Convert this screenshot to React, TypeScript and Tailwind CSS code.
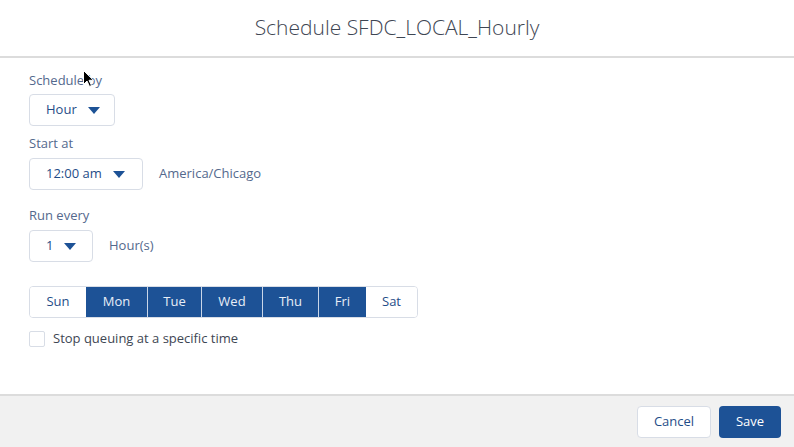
import { useState } from 'react'

const days = [
  { label: 'Sun', w: 'w-[56px]', on: false },
  { label: 'Mon', w: 'w-[61px]', on: true },
  { label: 'Tue', w: 'w-[54px]', on: true },
  { label: 'Wed', w: 'w-[61px]', on: true },
  { label: 'Thu', w: 'w-[56px]', on: true },
  { label: 'Fri', w: 'w-[48px]', on: true },
  { label: 'Sat', w: 'w-[51px]', on: false },
]

function Caret() {
  return (
    <svg className="h-[7px] w-[12px]" viewBox="0 0 12 7">
      <path d="M0 0h12L6 7z" fill="#1d5296" />
    </svg>
  )
}

function Select({ value, width }: { value: string; width: string }) {
  return (
    <div
      className={`flex h-[32px] ${width} items-center gap-[11px] rounded-[4px] border border-[#d8dde6] bg-white pl-[16px] text-[13px] text-[#1f4d88]`}
    >
      <span>{value}</span>
      <Caret />
    </div>
  )
}

export default function App() {
  const [stop, setStop] = useState(false)

  return (
    <div className="relative flex h-[447px] w-[794px] flex-col bg-white font-['Open_Sans',sans-serif]">
      {/* Header */}
      <div className="flex h-[58px] items-center justify-center border-b-2 border-[#dcdcdc]">
        <h1 className="text-[21px] font-light text-[#3e4653]">
          Schedule SFDC_LOCAL_Hourly
        </h1>
      </div>

      {/* Body */}
      <div className="flex-1 pl-[29px] pt-[14px] text-[13px] text-[#54698d]">
        <p className="h-[16px] leading-[16px]">Schedule by</p>
        <div className="mt-[6px]">
          <Select value="Hour" width="w-[86px]" />
        </div>

        <p className="mt-[9px] h-[16px] leading-[16px]">Start at</p>
        <div className="mt-[7px] flex items-center gap-[16px]">
          <Select value="12:00 am" width="w-[114px]" />
          <span>America/Chicago</span>
        </div>

        <p className="mt-[17px] h-[16px] leading-[16px]">Run every</p>
        <div className="mt-[7px] flex items-center gap-[16px]">
          <Select value="1" width="w-[64px]" />
          <span>Hour(s)</span>
        </div>

        <div className="mt-[24px] flex h-[32px] w-fit overflow-hidden rounded-[4px] border border-[#d8dde6]">
          {days.map((d, i) => (
            <div
              key={d.label}
              className={`flex ${d.w} items-center justify-center ${
                d.on
                  ? 'bg-[#1d5296] text-[#e8eef7]'
                  : 'bg-white text-[#1f4d88]'
              } ${i > 0 && days[i - 1].on && d.on ? 'border-l border-[#c9d6e8]' : ''}`}
            >
              {d.label}
            </div>
          ))}
        </div>

        <label className="mt-[11px] flex cursor-pointer items-center gap-[8px] text-[#3e4653]">
          <span
            className="h-[16px] w-[16px] rounded-[2px] border border-[#d8dde6] bg-white"
            onClick={() => setStop(!stop)}
          />
          <span>Stop queuing at a specific time</span>
        </label>
      </div>

      {/* Footer */}
      <div className="flex h-[53px] items-center justify-end gap-[8px] border-t-2 border-[#dcdcdc] bg-[#f1f1f1] pr-[13px]">
        <button
          className="h-[32px] w-[74px] rounded-[4px] border border-[#d8dde6] bg-white text-[13px] text-[#1f4d88]"
          type="button"
        >
          Cancel
        </button>
        <button
          className="h-[32px] w-[62px] rounded-[4px] bg-[#1d5296] text-[13px] text-white"
          type="button"
        >
          Save
        </button>
      </div>

      {/* mouse pointer */}
      <svg
        className="absolute left-[83px] top-[70px] h-[17px] w-[11px]"
        viewBox="0 0 11 17"
      >
        <path
          d="M0.5 0.5v14l3.5-3.5 2.5 5.5 2-1-2.5-5.2h4.5z"
          fill="#000"
          stroke="#fff"
          strokeWidth="1"
        />
      </svg>
    </div>
  )
}
